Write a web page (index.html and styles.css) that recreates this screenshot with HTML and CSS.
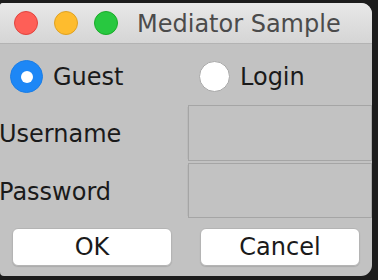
FILE: index.html
```html
<!DOCTYPE html>
<html lang="en">
    <head>
        <meta charset="UTF-8">
        <meta name="viewport" content="width=device-width, initial-scale=1.0">
        <title>Mediator Sample</title>
        <link rel="stylesheet" href="styles.css">
    </head>
    <body>
        <div class="window">
            <div class="titlebar">
                <div class="lights">
                    <span class="light red"></span>
                    <span class="light yellow"></span>
                    <span class="light green"></span>
                </div>
                <div class="title">Mediator Sample</div>
            </div>

            <div class="radios">
                <label class="radio-item">
                    <span class="radio checked"></span>
                    <span class="radio-text">Guest</span>
                </label>
                <label class="radio-item">
                    <span class="radio"></span>
                    <span class="radio-text">Login</span>
                </label>
            </div>

            <div class="fields">
                <div class="field-label">Username</div>
                <div class="field-box"></div>
                <div class="field-label">Password</div>
                <div class="field-box"></div>
            </div>

            <div class="buttons">
                <button class="btn">OK</button>
                <button class="btn">Cancel</button>
            </div>
        </div>
    </body>
</html>
```

FILE: styles.css
```css
body {
    margin: 0;
    background-color: #1c1c1c;
    font-family: "DejaVu Sans", sans-serif;
    height: 280px;
    overflow: hidden;
}

.window {
    margin-top: 3px;
    width: 372px;
    height: 273px;
    background-color: #c2c2c2;
    border-radius: 3px 11px 11px 4px;
    overflow: hidden;
}

.titlebar {
    height: 40px;
    display: flex;
    align-items: center;
    background: linear-gradient(#e8e8e8, #d5d5d5);
    border-bottom: 1px solid #b3b3b3;
}

.lights {
    display: flex;
    gap: 16px;
    padding-left: 14px;
}

.light {
    width: 24px;
    height: 24px;
    border-radius: 50%;
    box-sizing: border-box;
}

.red {
    background-color: #fe5f57;
    border: 1px solid #e0443e;
}

.yellow {
    background-color: #febc2e;
    border: 1px solid #dea123;
}

.green {
    background-color: #28c840;
    border: 1px solid #1aab29;
}

.title {
    margin-left: 19px;
    font-size: 24px;
    color: #4b4b4b;
    padding-top: 2px;
}

.radios {
    display: grid;
    grid-template-columns: 189px 1fr;
    padding: 16px 0 12px 10px;
    height: 32px;
}

.radio-item {
    display: flex;
    align-items: center;
    gap: 10px;
}

.radio {
    width: 31px;
    height: 31px;
    border-radius: 50%;
    box-sizing: border-box;
    background-color: #ffffff;
    border: 1px solid #a9a9a9;
    display: flex;
    align-items: center;
    justify-content: center;
}

.radio.checked {
    width: 33px;
    height: 33px;
    background-color: #1d87f6;
    border: 1px solid #1a7de6;
}

.radio.checked::after {
    content: "";
    width: 12px;
    height: 12px;
    border-radius: 50%;
    background-color: #ffffff;
}

.radio-text {
    font-size: 24px;
    color: #1a1a1a;
}

.fields {
    display: grid;
    grid-template-columns: 188px 1fr;
    grid-template-rows: 56px 55px;
    row-gap: 2px;
    margin-top: 1px;
}

.field-label {
    display: flex;
    align-items: center;
    font-size: 24px;
    color: #1a1a1a;
    margin-left: -1px;
    padding-top: 2px;
}

.field-box {
    border: 1px solid #a5a5a5;
    background-color: #c2c2c2;
    box-shadow: -3px 0 0 -2px #bababa;
}

.buttons {
    display: grid;
    grid-template-columns: 160px 160px;
    column-gap: 28px;
    padding: 10px 12px;
}

.btn {
    height: 38px;
    font-family: "DejaVu Sans", sans-serif;
    font-size: 24px;
    color: #1a1a1a;
    background-color: #ffffff;
    border: 1px solid #b4b4b4;
    border-radius: 6px;
    box-shadow: 0 1px 1px rgba(0, 0, 0, 0.12);
    padding: 0;
}
```
